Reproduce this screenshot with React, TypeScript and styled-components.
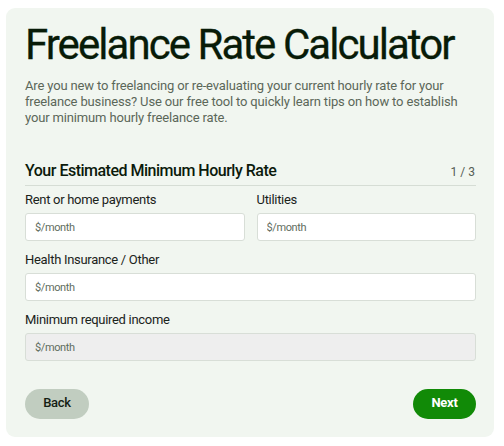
import React from "react";
import styled, { createGlobalStyle } from "styled-components";

const FONT = `Roboto, "Liberation Sans", Arial, sans-serif`;

const Global = createGlobalStyle`
  html, body { margin: 0; padding: 0; background: #ffffff; }
  body { font-family: ${FONT}; }
  * { box-sizing: border-box; }
`;

const Page = styled.div`
  padding: 8px 10px 9px 6px;
`;

const Card = styled.section`
  background: #f1f6f0;
  border-radius: 9px;
  padding: 14px 18px 18px 19px;
`;

const Title = styled.h1`
  margin: 0;
  font-size: 42px;
  line-height: 46px;
  font-weight: 400;
  letter-spacing: -1.95px;
  color: #081b08;
  white-space: nowrap;
  -webkit-text-stroke: 0.3px #081b08;
`;

const Intro = styled.p`
  margin: 10px 0 0;
  font-size: 13px;
  line-height: 16px;
  color: #5b6759;
  letter-spacing: -0.15px;
`;

const StepHeader = styled.div`
  margin-top: 35px;
  display: flex;
  justify-content: space-between;
  align-items: baseline;
  padding-bottom: 4px;
  border-bottom: 1px solid #d6ddd5;
`;

const StepTitle = styled.h2`
  margin: 0;
  font-size: 16px;
  line-height: 20px;
  font-weight: 500;
  letter-spacing: -0.5px;
  color: #0b1a0b;
`;

const StepCount = styled.span`
  font-size: 12px;
  color: #555d55;
  padding-right: 1px;
`;

const Form = styled.div`
  margin-top: 6px;
  display: flex;
  flex-direction: column;
  gap: 11px;
`;

const Row = styled.div`
  display: grid;
  grid-template-columns: 1fr 1fr;
  column-gap: 12px;
`;

const Field = styled.label`
  display: flex;
  flex-direction: column;
  gap: 5px;
`;

const Label = styled.span`
  font-size: 13px;
  line-height: 16px;
  letter-spacing: -0.3px;
  color: #1b231b;
`;

const Input = styled.input<{ $disabled?: boolean }>`
  height: 28px;
  width: 100%;
  border: 1px solid #d8ded7;
  border-radius: 3px;
  padding: 0 9px;
  font-family: ${FONT};
  font-size: 11px;
  letter-spacing: -0.4px;
  color: #1b231b;
  background: ${(p) => (p.$disabled ? "#eeeeee" : "#ffffff")};
  outline: none;
  &::placeholder { color: #5f6d5e; opacity: 1; }
`;

const Actions = styled.div`
  margin-top: 28px;
  display: flex;
  justify-content: space-between;
`;

const Button = styled.button<{ $primary?: boolean }>`
  height: 30px;
  width: ${(p) => (p.$primary ? "63px" : "64px")};
  padding: 0 0 3px;
  border: none;
  border-radius: 15px;
  font-family: ${FONT};
  font-size: 13px;
  font-weight: ${(p) => (p.$primary ? 700 : 500)};
  letter-spacing: -0.3px;
  background: ${(p) => (p.$primary ? "#118a07" : "#c1cdc0")};
  color: ${(p) => (p.$primary ? "#ffffff" : "#142014")};
  cursor: pointer;
`;

export default function App() {
  return (
    <Page>
      <Global />
      <Card>
        <Title>Freelance Rate Calculator</Title>
        <Intro>
          Are you new to freelancing or re-evaluating your current hourly rate for your
          freelance business? Use our free tool to quickly learn tips on how to establish
          your minimum hourly freelance rate.
        </Intro>
        <StepHeader>
          <StepTitle>Your Estimated Minimum Hourly Rate</StepTitle>
          <StepCount>1 / 3</StepCount>
        </StepHeader>
        <Form>
          <Row>
            <Field>
              <Label>Rent or home payments</Label>
              <Input placeholder="$/month" />
            </Field>
            <Field>
              <Label>Utilities</Label>
              <Input placeholder="$/month" />
            </Field>
          </Row>
          <Field>
            <Label>Health Insurance / Other</Label>
            <Input placeholder="$/month" />
          </Field>
          <Field>
            <Label>Minimum required income</Label>
            <Input placeholder="$/month" $disabled disabled />
          </Field>
        </Form>
        <Actions>
          <Button>Back</Button>
          <Button $primary>Next</Button>
        </Actions>
      </Card>
    </Page>
  );
}
